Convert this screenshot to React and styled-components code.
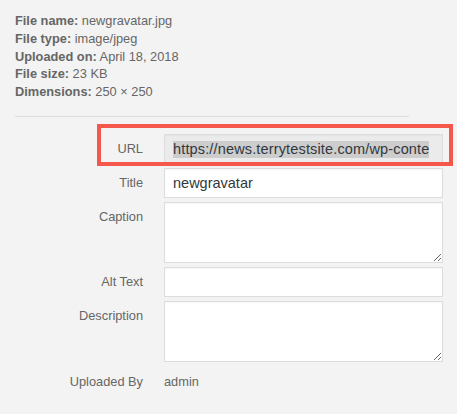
import styled, { createGlobalStyle } from "styled-components";

const Global = createGlobalStyle`
  html, body {
    margin: 0;
    background: #f3f3f3;
    font-family: "Liberation Sans", Arial, sans-serif;
  }
`;

const Panel = styled.div`
  position: relative;
  width: 457px;
  height: 414px;
  overflow: hidden;
  background: #f3f3f3;
`;

const Info = styled.div`
  padding: 12px 15px 0;
  font-size: 12.8px;
  line-height: 17.75px;
  color: #666;
`;

const Line = styled.div`
  strong {
    font-weight: bold;
  }
`;

const Rule = styled.div`
  height: 1px;
  background: #dcdcdc;
  width: ${(p) => p.$w}px;
  margin: ${(p) => p.$m};
`;

const Settings = styled.div`
  display: grid;
  grid-template-columns: 143px 279px;
  column-gap: 21px;
  row-gap: 4px;
  padding-top: 17px;
`;

const Label = styled.div`
  text-align: right;
  font-size: 12.8px;
  line-height: 16px;
  color: #666;
  padding-top: ${(p) => p.$pt || 7}px;
`;

const fieldBase = `
  box-sizing: border-box;
  width: 279px;
  border: 1px solid #ddd;
  background: #fff;
  font-family: "Liberation Sans", Arial, sans-serif;
  font-size: 14.5px;
  color: #32373c;
  margin: 0;
  outline: none;
  box-shadow: inset 0 1px 2px rgba(0, 0, 0, 0.04);
`;

const ReadOnly = styled.div`
  ${fieldBase}
  height: 30px;
  background: #ebebeb;
  padding: 6px 8px 0;
  white-space: nowrap;
  overflow: hidden;
`;

const Selected = styled.span`
  background: #cdcdcd;
  line-height: 17px;
  letter-spacing: 0.15px;
  display: inline-block;
`;

const TextInput = styled.input`
  ${fieldBase}
  height: 30px;
  padding: 0 8px;
`;

const TextArea = styled.textarea`
  ${fieldBase}
  height: 61px;
  padding: 6px 8px;
  resize: vertical;
`;

const Value = styled.div`
  font-size: 12.8px;
  line-height: 16px;
  color: #666;
  padding-top: 8px;
  padding-bottom: 24px;
`;

const Highlight = styled.div`
  position: absolute;
  left: 97px;
  top: 124px;
  width: 356px;
  height: 42px;
  box-sizing: border-box;
  border: 4px solid #f4574b;
  pointer-events: none;
`;

export default function App() {
  return (
    <Panel>
      <Global />
      <Info>
        <Line><strong>File name:</strong> newgravatar.jpg</Line>
        <Line><strong>File type:</strong> image/jpeg</Line>
        <Line><strong>Uploaded on:</strong> April 18, 2018</Line>
        <Line><strong>File size:</strong> 23 KB</Line>
        <Line><strong>Dimensions:</strong> 250 × 250</Line>
      </Info>
      <Rule $w={394} $m="15px 0 0 15px" />
      <Settings>
        <Label>URL</Label>
        <ReadOnly>
          <Selected>https://news.terrytestsite.com/wp-conte</Selected>
        </ReadOnly>

        <Label>Title</Label>
        <TextInput defaultValue="newgravatar" />

        <Label>Caption</Label>
        <TextArea />

        <Label>Alt Text</Label>
        <TextInput />

        <Label>Description</Label>
        <TextArea />

        <Label $pt={8}>Uploaded By</Label>
        <Value>admin</Value>
      </Settings>
      <Rule $w={428} $m="0 0 0 15px" />
      <Highlight />
    </Panel>
  );
}
